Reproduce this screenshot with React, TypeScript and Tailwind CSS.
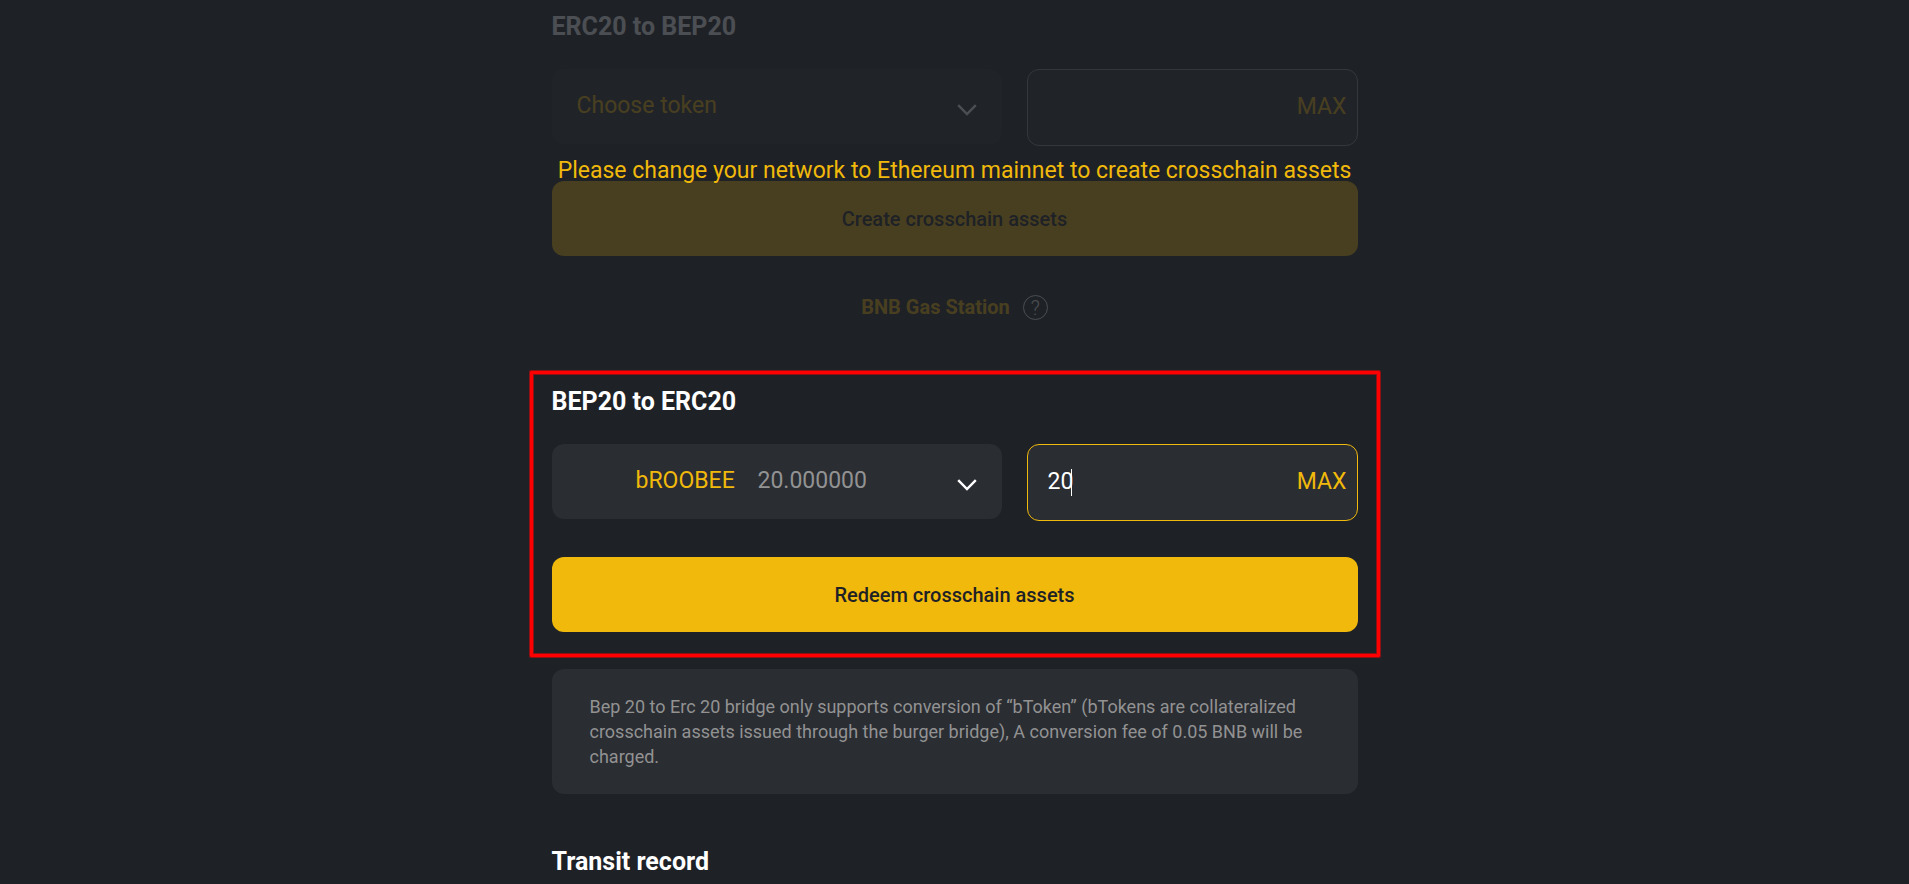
import { useState } from 'react'
import type { ReactNode } from 'react'

type Token = {
  symbol: string
  balance: string
}

const TOKENS: Token[] = [{ symbol: 'bROOBEE', balance: '20.000000' }]

function Chevron() {
  return (
    <svg
      viewBox="0 0 20 12"
      className="pointer-events-none absolute right-[25px] top-[35px] h-3 w-5"
      fill="none"
      stroke="white"
      strokeWidth="2.4"
      aria-hidden="true"
    >
      <path d="M1.2 1.2 10 10 18.8 1.2" />
    </svg>
  )
}

function TokenSelect({
  label,
  value,
  onChange,
}: {
  label: string
  value: string
  onChange: (symbol: string) => void
}) {
  const token = TOKENS.find((t) => t.symbol === value)

  return (
    <div className="relative h-[75px]">
      <select
        aria-label={label}
        value={value}
        onChange={(e) => onChange(e.target.value)}
        className={`h-full w-full appearance-none rounded-xl bg-[#2a2d32] text-[23px] text-[#f0b90b] outline-none ${
          token ? 'pl-[84px]' : 'pl-[25px]'
        }`}
      >
        <option value="">Choose token</option>
        {TOKENS.map((t) => (
          <option key={t.symbol} value={t.symbol}>
            {t.symbol}
          </option>
        ))}
      </select>
      {token && (
        <span className="pointer-events-none absolute inset-y-0 left-[206px] flex items-center text-[23px] text-[#929292]">
          {token.balance}
        </span>
      )}
      <Chevron />
    </div>
  )
}

function AmountInput({
  label,
  value,
  onChange,
  onMax,
  focused = false,
}: {
  label: string
  value: string
  onChange: (amount: string) => void
  onMax: () => void
  focused?: boolean
}) {
  return (
    <div
      className={`flex h-[77px] items-center rounded-xl border bg-[#2a2d32] pl-5 pr-2.5 text-[23px] ${
        focused ? 'border-[#f0b90b]' : 'border-[#8d9095]'
      }`}
    >
      <input
        aria-label={label}
        value={value}
        onChange={(e) => onChange(e.target.value)}
        inputMode="decimal"
        className="field-sizing-content min-w-0 bg-transparent text-white caret-transparent outline-none"
      />
      {focused && <span className="-ml-0.5 h-[27px] w-px shrink-0 bg-white" />}
      <button type="button" onClick={onMax} className="ml-auto text-[#f0b90b]">
        MAX
      </button>
    </div>
  )
}

function Fields({ children }: { children: ReactNode }) {
  return (
    <div className="mt-[26px] grid grid-cols-[450fr_331fr] items-start gap-[25px]">{children}</div>
  )
}

function Title({ children }: { children: ReactNode }) {
  return <h2 className="text-[25px]/[32px] font-bold text-white">{children}</h2>
}

function SubmitButton({ children }: { children: ReactNode }) {
  return (
    <button
      type="button"
      className="h-[75px] w-full rounded-xl bg-[#f0b90b] text-xl font-medium text-[#1e2126]"
    >
      {children}
    </button>
  )
}

export default function App() {
  const [createToken, setCreateToken] = useState('')
  const [createAmount, setCreateAmount] = useState('')
  const [redeemToken, setRedeemToken] = useState('bROOBEE')
  const [redeemAmount, setRedeemAmount] = useState('20')

  return (
    <div className="min-h-screen bg-[#1e2126] font-[Roboto,sans-serif]">
      <main className="mx-auto max-w-[806px] pt-[11px]">
        <section>
          <div className="opacity-20">
            <Title>ERC20 to BEP20</Title>
            <Fields>
              <TokenSelect label="Token to create" value={createToken} onChange={setCreateToken} />
              <AmountInput
                label="Amount to create"
                value={createAmount}
                onChange={setCreateAmount}
                onMax={() => setCreateAmount('')}
              />
            </Fields>
          </div>
          {/* z-10 keeps the descenders above the button */}
          <div className="relative z-10 flex h-[35px] items-end justify-center">
            <p className="text-[23px]/[20px] text-[#f0b90b]">
              Please change your network to Ethereum mainnet to create crosschain assets
            </p>
          </div>
          <div className="opacity-20">
            <SubmitButton>Create crosschain assets</SubmitButton>
            <div className="mt-[38px] flex items-center justify-center gap-[13px]">
              <a href="#gas" className="text-xl/[27px] font-bold text-[#f0b90b]">
                BNB Gas Station
              </a>
              <button
                type="button"
                aria-label="About the gas station"
                className="flex size-[25px] items-center justify-center rounded-full border border-white text-xl font-light text-white"
              >
                ?
              </button>
            </div>
          </div>
        </section>

        <section className="relative mt-[65px]">
          <div className="pointer-events-none absolute -inset-x-[22px] -bottom-[25px] -top-[15px] rounded-[1px] border-3 border-[#ff0000] shadow-[0_0_0_1px_#8e1013,inset_0_0_0_1px_#8e1013]" />
          <Title>BEP20 to ERC20</Title>
          <Fields>
            <TokenSelect label="Token to redeem" value={redeemToken} onChange={setRedeemToken} />
            <AmountInput
              label="Amount to redeem"
              value={redeemAmount}
              onChange={setRedeemAmount}
              onMax={() => setRedeemAmount('20')}
              focused
            />
          </Fields>
          <div className="mt-9">
            <SubmitButton>Redeem crosschain assets</SubmitButton>
          </div>
        </section>

        <p className="mt-[37px] rounded-xl bg-[#2a2d32] px-[38px] py-[25px] text-lg/[25px] text-[#929292]">
          Bep 20 to Erc 20 bridge only supports conversion of “bToken” (bTokens are collateralized
          crosschain assets issued through the burger bridge), A conversion fee of 0.05 BNB will be
          charged.
        </p>

        <section className="mt-[52px]">
          <Title>Transit record</Title>
        </section>
      </main>
    </div>
  )
}
